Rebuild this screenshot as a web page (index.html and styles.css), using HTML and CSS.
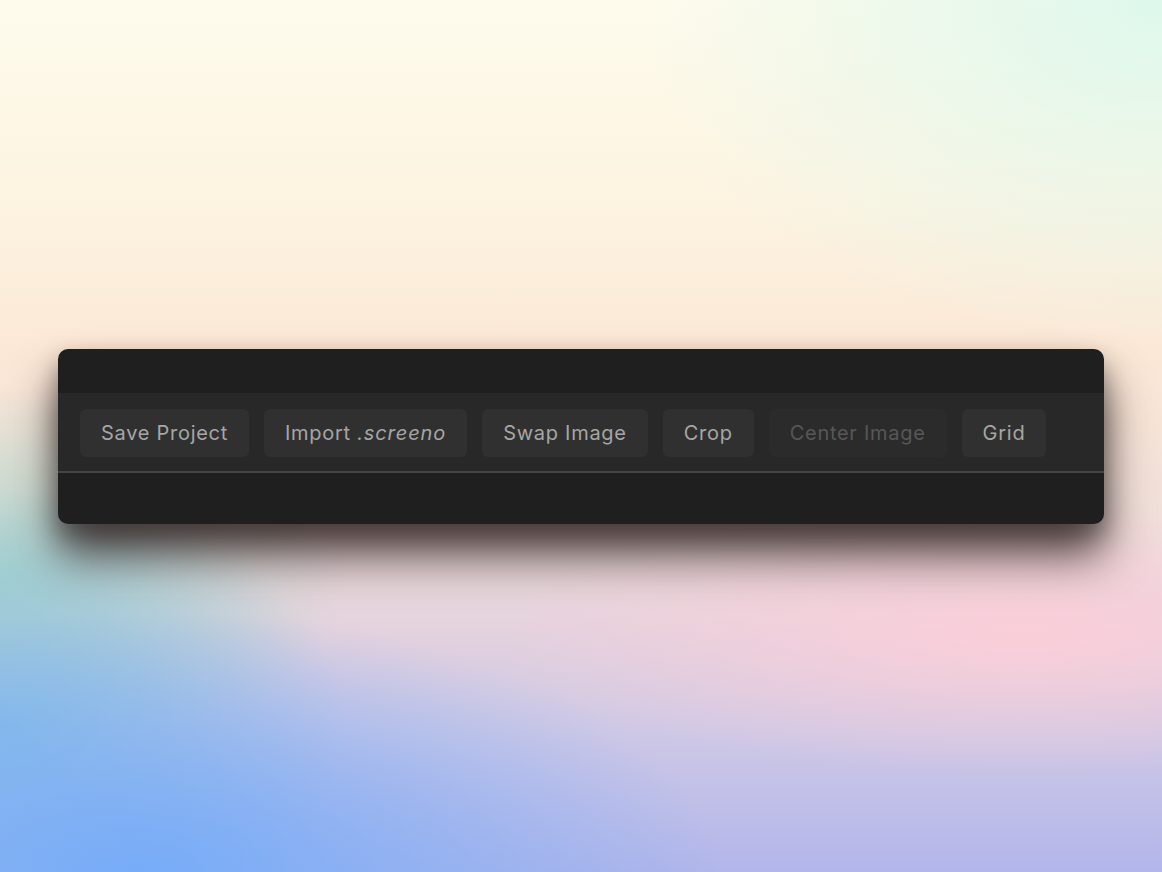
FILE: index.html
```html
<!DOCTYPE html>
<html>
<head>
<meta charset="utf-8">
<link rel="stylesheet" href="styles.css">
</head>
<body>
<div class="stage">
  <div class="panel">
    <div class="panel-top"></div>
    <div class="toolbar">
      <button class="btn">Save Project</button>
      <button class="btn">Import <em>.screeno</em></button>
      <button class="btn">Swap Image</button>
      <button class="btn">Crop</button>
      <button class="btn disabled">Center Image</button>
      <button class="btn">Grid</button>
    </div>
    <div class="panel-bottom"></div>
  </div>
</div>
</body>
</html>
```
FILE: styles.css
```css
html, body {
  margin: 0;
  padding: 0;
  height: 100%;
}
body {
  font-family: Inter, "Noto Sans", "Liberation Sans", sans-serif;
  background:
    radial-gradient(ellipse 45% 40% at 100% 0%, rgba(222,248,236,1) 0%, rgba(222,248,236,0) 100%),
    radial-gradient(ellipse 50% 30% at 12% 100%, rgba(118,172,248,1) 0%, rgba(118,172,248,0) 100%),
    radial-gradient(ellipse 30% 28% at 0% 84%, rgba(132,190,228,0.9) 0%, rgba(132,190,228,0) 100%),
    radial-gradient(ellipse 30% 22% at 0% 66%, rgba(168,212,200,0.95) 0%, rgba(168,212,200,0) 100%),
    radial-gradient(ellipse 45% 16% at 88% 73%, rgba(253,206,216,0.9) 0%, rgba(253,206,216,0) 100%),
    linear-gradient(180deg, #fefbec 0%, #fdf4e2 22%, #fce8d6 40%, #f0dfda 60%, #e4d2de 72%, #cec8e6 84%, #b2b6ea 100%);
}
.stage {
  height: 100%;
  display: flex;
  align-items: center;
  justify-content: center;
}
.panel {
  width: 1046px;
  background: #1f1f1f;
  border-radius: 10px;
  overflow: hidden;
  box-shadow: 0 32px 46px rgba(40, 25, 25, 0.75), 0 12px 24px rgba(0,0,0,0.35);
  display: flex;
  flex-direction: column;
}
.panel-top {
  height: 44px;
}
.toolbar {
  background: #282828;
  border-bottom: 2px solid #444444;
  padding: 16px 22px 14px;
  display: flex;
  gap: 15px;
}
.btn {
  height: 48px;
  padding: 0 21px;
  border: none;
  border-radius: 6px;
  background: #303030;
  color: #a6a6a6;
  font-family: Inter, "Noto Sans", "Liberation Sans", sans-serif;
  font-size: 20px;
  letter-spacing: 0.72px;
  cursor: default;
}
.btn em {
  font-style: italic;
  letter-spacing: 0.9px;
}
.btn.disabled {
  background: #2b2b2b;
  color: #575757;
}
.panel-bottom {
  height: 51px;
}
```
